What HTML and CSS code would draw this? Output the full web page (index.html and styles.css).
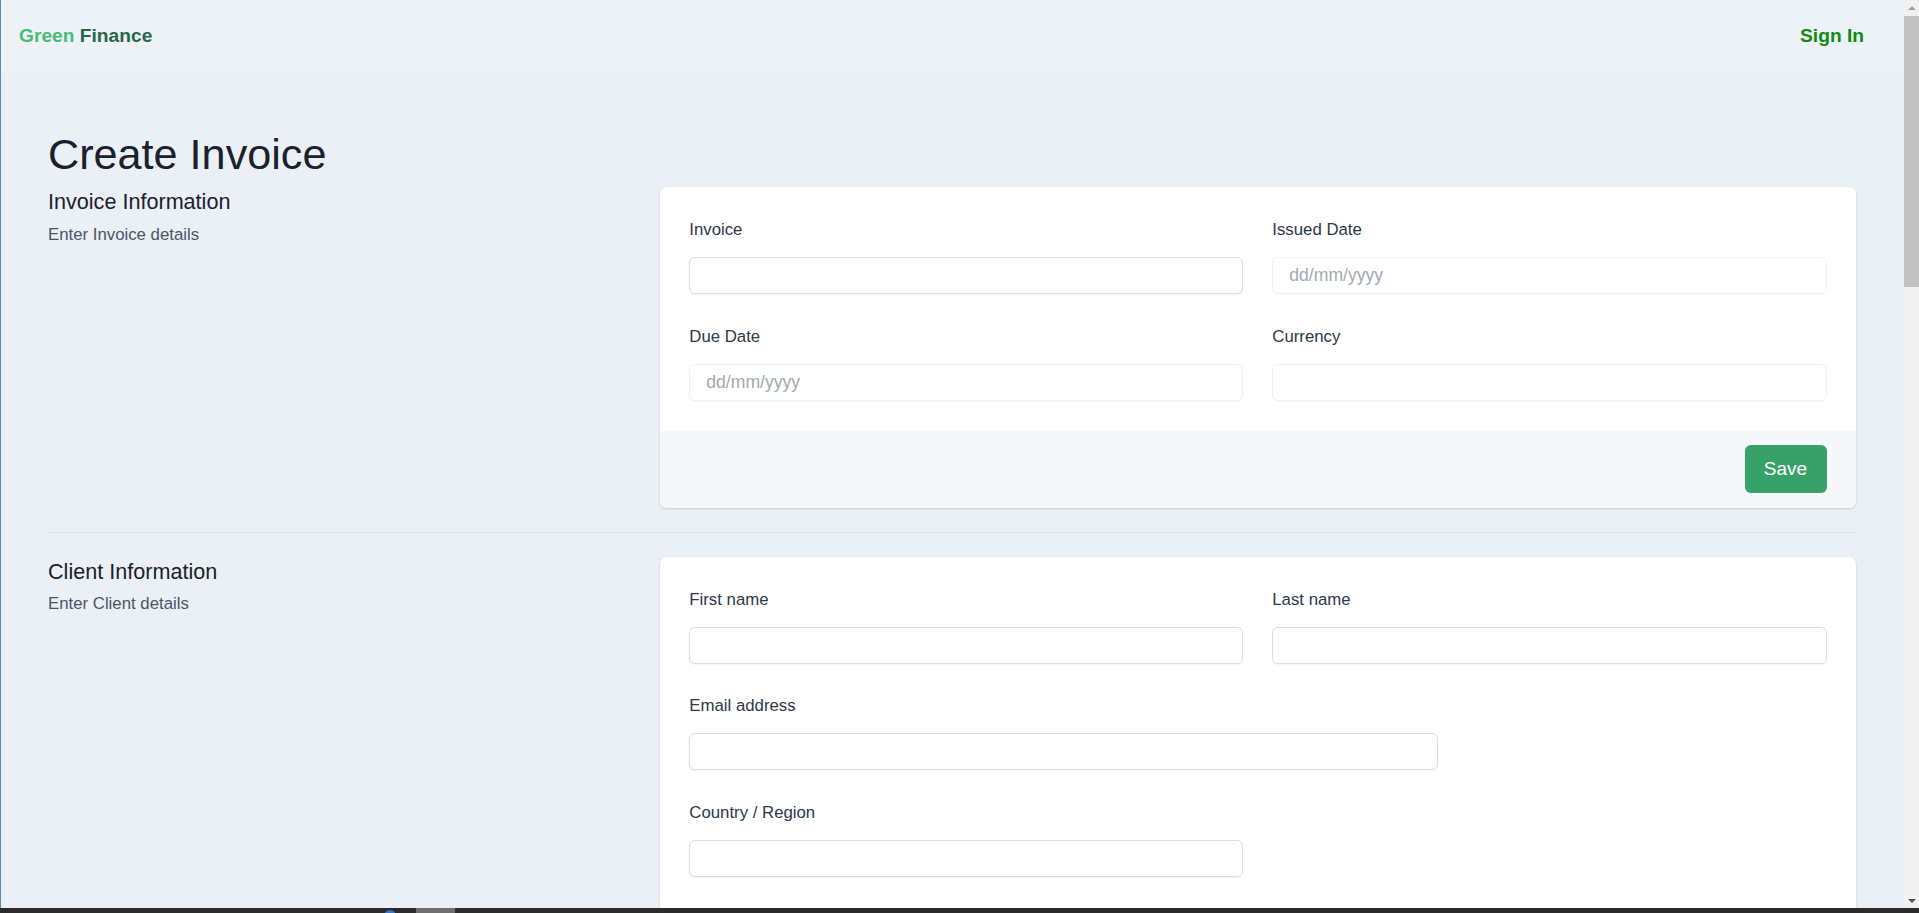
FILE: index.html
```html
<!DOCTYPE html>
<html lang="en">
<head>
<meta charset="utf-8">
<title>Create Invoice - Green Finance</title>
<link rel="stylesheet" href="styles.css">
</head>
<body>
<div class="window">
  <div class="edge"></div>
  <div class="viewport">
    <header class="navbar">
      <a class="brand" href="#"><span class="brand-light">Green</span> <span class="brand-dark">Finance</span></a>
      <a class="signin" href="#">Sign In</a>
    </header>
    <main class="page">
      <h1 class="page-title">Create Invoice</h1>

      <section class="form-section">
        <div class="section-info">
          <h2 class="section-title">Invoice Information</h2>
          <p class="section-desc">Enter Invoice details</p>
        </div>
        <form class="card">
          <div class="card-body">
            <div class="field span-3">
              <label class="label" for="invoice">Invoice</label>
              <input class="input" id="invoice" type="text">
            </div>
            <div class="field span-3">
              <label class="label" for="issued">Issued Date</label>
              <input class="input soft" id="issued" type="text" placeholder="dd/mm/yyyy">
            </div>
            <div class="field span-3">
              <label class="label" for="due">Due Date</label>
              <input class="input soft" id="due" type="text" placeholder="dd/mm/yyyy">
            </div>
            <div class="field span-3">
              <label class="label" for="currency">Currency</label>
              <input class="input soft" id="currency" type="text">
            </div>
          </div>
          <div class="card-footer">
            <button class="btn-save" type="button">Save</button>
          </div>
        </form>
      </section>

      <div class="divider"></div>

      <section class="form-section">
        <div class="section-info">
          <h2 class="section-title">Client Information</h2>
          <p class="section-desc">Enter Client details</p>
        </div>
        <form class="card">
          <div class="card-body card-body-long">
            <div class="field span-3">
              <label class="label" for="first">First name</label>
              <input class="input" id="first" type="text">
            </div>
            <div class="field span-3">
              <label class="label" for="last">Last name</label>
              <input class="input" id="last" type="text">
            </div>
            <div class="field new-row-4">
              <label class="label" for="email">Email address</label>
              <input class="input" id="email" type="text">
            </div>
            <div class="field new-row-3">
              <label class="label" for="country">Country / Region</label>
              <input class="input" id="country" type="text">
            </div>
          </div>
        </form>
      </section>
    </main>
  </div>
  <div class="scrollbar">
    <div class="sb-btn"><span class="arrow-up"></span></div>
    <div class="sb-track"><div class="sb-thumb"></div></div>
    <div class="sb-btn"><span class="arrow-down"></span></div>
  </div>
</div>
<div class="taskbar">
  <span class="task-icon"></span>
  <span class="task-item"></span>
</div>
</body>
</html>
```

FILE: styles.css
```css
html, body {
  margin: 0;
  padding: 0;
  height: 100%;
  overflow: hidden;
}

body {
  font-family: "Liberation Sans", Arial, sans-serif;
  display: flex;
  flex-direction: column;
  background: #2b2b2b;
}

.window {
  display: flex;
  height: 908px;
  flex: none;
}

.edge {
  width: 1px;
  background: #5b8ab3;
  flex: none;
}

.viewport {
  flex: 1;
  min-width: 0;
  overflow: hidden;
  background: #ebf0f7;
}

/* Navbar */
.navbar {
  height: 72px;
  display: flex;
  align-items: center;
  justify-content: space-between;
  padding: 0 40px 0 18px;
  background: #edf2f6;
}

.brand,
.signin {
  font-size: 19.2px;
  font-weight: 700;
  text-decoration: none;
}

.brand-light { color: #48bb78; }
.brand-dark { color: #276749; }

.signin { color: #108a10; }

/* Page */
.page {
  padding: 0 48px 0 47px;
}

.page-title {
  margin: 56px 0 7px;
  font-size: 43.2px;
  line-height: 52px;
  font-weight: 400;
  color: #1a202c;
}

.form-section {
  display: grid;
  grid-template-columns: repeat(3, 1fr);
  column-gap: 28.8px;
  align-items: start;
}

.section-info {
  grid-column: span 1;
  padding-top: 1px;
}

.section-title {
  margin: 0;
  font-size: 21.6px;
  line-height: 28.8px;
  font-weight: 400;
  color: #1a202c;
}

.section-desc {
  margin: 6px 0 0;
  font-size: 16.8px;
  line-height: 24px;
  color: #4a5568;
}

.card {
  grid-column: span 2;
  background: #ffffff;
  border-radius: 7px;
  overflow: hidden;
  box-shadow: 0 1px 3px rgba(0, 0, 0, 0.1), 0 1px 2px rgba(0, 0, 0, 0.06);
}

.card-body {
  padding: 31px 29.5px 30px 29px;
  display: grid;
  grid-template-columns: repeat(6, 1fr);
  column-gap: 28.8px;
  row-gap: 30.5px;
}

.card-body-long {
  padding-bottom: 120px;
}

.field { min-width: 0; }
.span-3 { grid-column: span 3; }
.new-row-4 { grid-column: 1 / span 4; }
.new-row-3 { grid-column: 1 / span 3; }

.label {
  display: block;
  font-size: 16.8px;
  line-height: 24px;
  color: #2d3748;
  margin-bottom: 15px;
}

.input {
  display: block;
  width: 100%;
  box-sizing: border-box;
  height: 37px;
  margin: 0;
  padding: 0 16px;
  border: 1px solid #d9dee5;
  border-radius: 6px;
  background: #ffffff;
  box-shadow: 0 1px 2px rgba(0, 0, 0, 0.05);
  font-family: "Liberation Sans", Arial, sans-serif;
  font-size: 17.6px;
  color: #1a202c;
  outline: none;
}

.input.soft {
  border-color: #eef0f3;
  box-shadow: 0 1px 2px rgba(0, 0, 0, 0.03);
}

.input::placeholder {
  color: #a3a9b2;
}

.card-footer {
  display: flex;
  justify-content: flex-end;
  padding: 14.5px 29.5px;
  background: #f5f8fb;
}

.btn-save {
  width: 82px;
  height: 48px;
  border: none;
  border-radius: 6px;
  background: #38a169;
  color: #ffffff;
  font-family: "Liberation Sans", Arial, sans-serif;
  font-size: 19px;
  padding: 0;
}

.divider {
  margin: 24px 0;
  border-top: 1px solid #dde3eb;
}

/* Fake classic scrollbar */
.scrollbar {
  width: 15px;
  flex: none;
  display: flex;
  flex-direction: column;
  background: #f1f1f1;
}

.sb-btn {
  height: 15px;
  flex: none;
  display: flex;
  align-items: center;
  justify-content: center;
}

.arrow-up {
  width: 0;
  height: 0;
  border-left: 4px solid transparent;
  border-right: 4px solid transparent;
  border-bottom: 4px solid #a3a3a3;
}

.arrow-down {
  width: 0;
  height: 0;
  border-left: 4px solid transparent;
  border-right: 4px solid transparent;
  border-top: 4px solid #505050;
}

.sb-track {
  flex: 1;
  padding-top: 1px;
}

.sb-thumb {
  height: 271px;
  background: #c1c1c1;
}

/* Bottom strip */
.taskbar {
  height: 5px;
  flex: none;
  display: flex;
  align-items: flex-start;
  padding-left: 384px;
  gap: 20px;
  background: #2b2b2b;
  overflow: hidden;
}

.task-icon {
  width: 12px;
  height: 12px;
  margin-top: 2px;
  border-radius: 50%;
  background: #3a78d0;
}

.task-item {
  width: 39px;
  height: 5px;
  background: #6f6f6f;
}
```
